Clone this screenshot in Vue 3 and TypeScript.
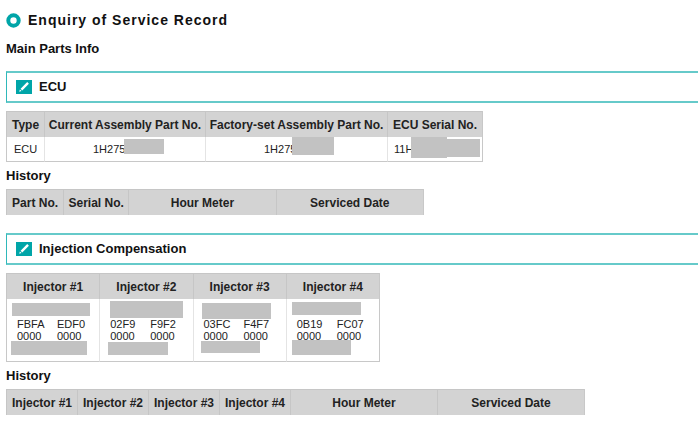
<script setup lang="ts">
interface Mask {
  x: number
  y: number
  w: number
  h: number
}

interface Injector {
  name: string
  codes: [string, string][]
  masks: Mask[]
}

const ecuMasks: Record<string, Mask[]> = {
  current: [{ x: 79, y: 2, w: 40, h: 15 }],
  factory: [{ x: 86, y: 0, w: 42, h: 18 }],
  serial: [
    { x: 23, y: 0, w: 36, h: 21 },
    { x: 59, y: 2, w: 33, h: 18 },
  ],
}

const injectors: Injector[] = [
  {
    name: 'Injector #1',
    codes: [['FBFA', 'EDF0'], ['0000', '0000']],
    masks: [{ x: 5, y: 4, w: 78, h: 13 }, { x: 4, y: 42, w: 76, h: 14 }],
  },
  {
    name: 'Injector #2',
    codes: [['02F9', 'F9F2'], ['0000', '0000']],
    masks: [{ x: 10, y: 2, w: 73, h: 17 }, { x: 8, y: 43, w: 60, h: 13 }],
  },
  {
    name: 'Injector #3',
    codes: [['03FC', 'F4F7'], ['0000', '0000']],
    masks: [{ x: 8, y: 4, w: 69, h: 16 }, { x: 7, y: 42, w: 59, h: 12 }],
  },
  {
    name: 'Injector #4',
    codes: [['0B19', 'FC07'], ['0000', '0000']],
    masks: [{ x: 5, y: 3, w: 69, h: 13 }, { x: 5, y: 41, w: 59, h: 15 }],
  },
]

const place = (m: Mask) => ({
  left: `${m.x}px`,
  top: `${m.y}px`,
  width: `${m.w}px`,
  height: `${m.h}px`,
})
</script>

<template>
  <main class="page">
    <header class="title">
      <svg class="ring" viewBox="0 0 15 15" aria-hidden="true">
        <circle cx="7.5" cy="7.5" r="5.2" fill="none" stroke="#00a5a8" stroke-width="4" />
      </svg>
      <h1>Enquiry of Service Record</h1>
    </header>
    <h2 class="lead">Main Parts Info</h2>

    <section>
      <div class="panel">
        <svg class="pen" viewBox="0 0 16 14" aria-hidden="true">
          <rect width="16" height="14" fill="#00a5a8" />
          <path d="M3.2 11.8 3.9 9.4 5.6 11.1ZM4.6 8.7 11.2 2.1 12.9 3.7 6.3 10.4Z" fill="#fff" />
        </svg>
        <h2>ECU</h2>
      </div>
      <table class="ecu">
        <colgroup>
          <col class="w-type" /><col class="w-current" /><col class="w-factory" /><col class="w-ecu-serial" />
        </colgroup>
        <thead>
          <tr>
            <th>Type</th>
            <th>Current Assembly Part No.</th>
            <th>Factory-set Assembly Part No.</th>
            <th>ECU Serial No.</th>
          </tr>
        </thead>
        <tbody>
          <tr>
            <td class="type">ECU</td>
            <td class="current">1H275<span v-for="(m, i) in ecuMasks.current" :key="i" class="mask" :style="place(m)" /></td>
            <td class="factory">1H275<span v-for="(m, i) in ecuMasks.factory" :key="i" class="mask" :style="place(m)" /></td>
            <td class="serial">11H<span v-for="(m, i) in ecuMasks.serial" :key="i" class="mask" :style="place(m)" /></td>
          </tr>
        </tbody>
      </table>
      <h3>History</h3>
      <table class="ecu-history">
        <colgroup>
          <col class="w-part" /><col class="w-serial" /><col class="w-wide" /><col class="w-wide" />
        </colgroup>
        <thead>
          <tr>
            <th>Part No.</th>
            <th>Serial No.</th>
            <th>Hour Meter</th>
            <th>Serviced Date</th>
          </tr>
        </thead>
      </table>
    </section>

    <section class="next">
      <div class="panel">
        <svg class="pen" viewBox="0 0 16 14" aria-hidden="true">
          <rect width="16" height="14" fill="#00a5a8" />
          <path d="M3.2 11.8 3.9 9.4 5.6 11.1ZM4.6 8.7 11.2 2.1 12.9 3.7 6.3 10.4Z" fill="#fff" />
        </svg>
        <h2>Injection Compensation</h2>
      </div>
      <table class="injection">
        <thead>
          <tr>
            <th v-for="inj in injectors" :key="inj.name">{{ inj.name }}</th>
          </tr>
        </thead>
        <tbody>
          <tr>
            <td v-for="inj in injectors" :key="inj.name">
              <div class="codes">
                <template v-for="(pair, r) in inj.codes" :key="r">
                  <span>{{ pair[0] }}</span><span>{{ pair[1] }}</span>
                </template>
              </div>
              <span v-for="(m, i) in inj.masks" :key="i" class="mask" :style="place(m)" />
            </td>
          </tr>
        </tbody>
      </table>
      <h3>History</h3>
      <table class="injection-history">
        <colgroup>
          <col v-for="inj in injectors" :key="inj.name" class="w-inj" />
          <col class="w-wide" /><col class="w-wide" />
        </colgroup>
        <thead>
          <tr>
            <th v-for="inj in injectors" :key="inj.name">{{ inj.name }}</th>
            <th>Hour Meter</th>
            <th>Serviced Date</th>
          </tr>
        </thead>
      </table>
    </section>
  </main>
</template>

<style>
body {
  margin: 0;
  background: #fff;
}
</style>

<style scoped>
.page {
  padding: 12px 0 12px 6px;
  overflow: hidden;
  font-family: "Liberation Sans", Arial, sans-serif;
  font-size: 11px;
  color: #222;
}
h1,
h2,
h3 {
  margin: 0;
  font-size: 13px;
  line-height: 16px;
  font-weight: bold;
  color: #111;
}
.title {
  display: flex;
  align-items: center;
  gap: 7px;
}
.title h1 {
  font-size: 14px;
  letter-spacing: 1px;
}
.ring {
  width: 15px;
  height: 15px;
}
.lead {
  margin: 13px 0 14px;
}
.panel {
  display: flex;
  align-items: center;
  gap: 7px;
  box-sizing: border-box;
  height: 32px;
  padding-left: 9px;
  border: 1px solid #2fb8ba;
  border-width: 2px 0 2px 1px;
  border-color: #66caca #66caca #66caca #2fb8ba;
  margin-bottom: 8px;
}
.pen {
  width: 16px;
  height: 14px;
}
.next {
  margin-top: 18px;
}
h3 {
  margin: 6px 0 5px;
}
table {
  table-layout: fixed;
  border-collapse: separate;
  border-spacing: 0;
  box-sizing: border-box;
  border-right: 1px solid #c8c8c8;
}
th,
td {
  box-sizing: border-box;
  padding: 0;
  white-space: nowrap;
}
th {
  height: 26px;
  background: #d3d3d3;
  border-top: 1px solid #c6c6c6;
  border-left: 1px solid #c6c6c6;
  font-size: 12px;
  line-height: 16px;
  text-align: center;
}
td {
  position: relative;
  border-left: 1px solid #e4e4e4;
  border-bottom: 1px solid #c8c8c8;
  vertical-align: top;
}
td:first-child {
  border-left-color: #c8c8c8;
}
.ecu {
  width: 477px;
}
.ecu td {
  height: 25px;
  line-height: 24px;
}
.w-type { width: 38px; }
.w-current { width: 161px; }
.w-factory { width: 182px; }
.w-ecu-serial { width: 95px; }
.type { padding-left: 7px; }
.current { padding-left: 48px; }
.factory { padding-left: 58px; }
.serial { padding-left: 6px; }
.ecu-history {
  width: 418px;
}
.w-part { width: 57px; }
.w-serial { width: 65px; }
.w-wide { width: 147px; }
.injection {
  width: 374px;
}
.injection td {
  height: 63px;
}
.codes {
  display: grid;
  grid-template-columns: 40px 40px;
  line-height: 12px;
  padding: 19px 0 0 10px;
}
.injection-history {
  width: 578px;
}
.w-inj { width: 71px; }
.mask {
  position: absolute;
  background: #c2c2c2;
}
</style>
